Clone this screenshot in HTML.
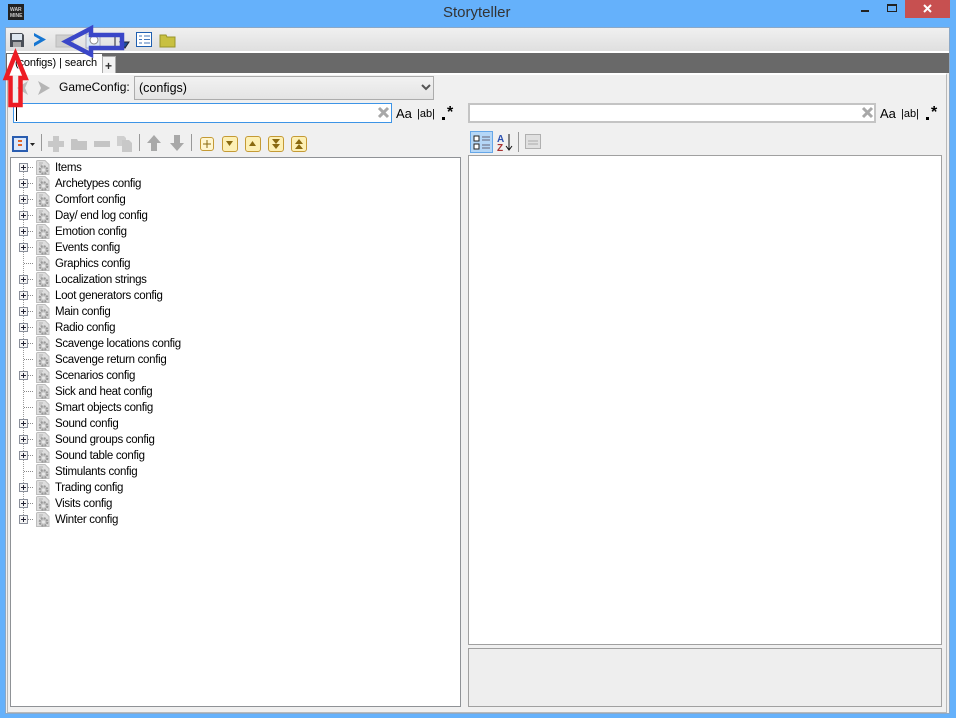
<!DOCTYPE html>
<html><head><meta charset="utf-8"><style>
html,body{margin:0;padding:0}
body{width:956px;height:718px;overflow:hidden;position:relative;background:#65b1fb;font-family:"Liberation Sans",sans-serif;font-size:11.500px;color:#000}
.a{position:absolute;box-sizing:border-box}
.t{position:absolute;white-space:nowrap;line-height:16px;letter-spacing:-.31px}
svg{position:absolute;left:0;top:0}
</style></head><body>
<div class="a" style="left:443px;top:5px;font-size:15px;color:#333;white-space:nowrap;line-height:16px">Storyteller</div>
<div class="a" style="left:905px;top:0;width:45px;height:18px;background:#c75050"></div>
<div class="a" style="left:5px;top:27px;width:945px;height:687px;background:#f0f0f0;border:1px solid #8aa8c8"></div>
<div class="a" style="left:6px;top:28px;width:943px;height:23px;background:linear-gradient(#f0f0f0,#dfdfdf)"></div>
<div class="a" style="left:6px;top:51px;width:943px;height:2px;background:#fff"></div>
<div class="a" style="left:6px;top:53px;width:943px;height:20px;background:#696969"></div>
<div class="a" style="left:7px;top:73px;width:940px;height:640px;background:#f0f0f0;border:1px solid #b8b8b8;border-top:2px solid #fff"></div>
<div class="a" style="left:7px;top:54px;width:95px;height:21px;background:#fff"></div>
<div class="a" style="left:102px;top:56px;width:14px;height:17px;background:#f2f2f2;border:1px solid #aaa;border-bottom:0"></div>
<div class="a" style="left:102px;top:58px;width:13px;text-align:center;font-size:12px;font-weight:bold;line-height:16px;color:#333">+</div>
<div class="t" style="left:15px;top:55px;font-size:11px;letter-spacing:-.12px">(configs) | search</div>
<div class="t" style="left:59px;top:79px;font-size:12px;letter-spacing:0">GameConfig:</div>
<div class="a" style="left:134px;top:76px;width:300px;height:24px;background:linear-gradient(#f2f2f2,#e4e4e4);border:1px solid #acacac"></div>
<div class="t" style="left:139px;top:80px;font-size:12.500px;letter-spacing:0">(configs)</div>
<div class="a" style="left:13px;top:103px;width:379px;height:20px;background:#fff;border:1px solid #3d94e6"></div>
<div class="a" style="left:16px;top:105px;width:1px;height:16px;background:#000"></div>
<div class="a" style="left:468px;top:103px;width:408px;height:20px;background:#fff;border:2px solid #c4c4c4"></div>
<div class="t" style="left:396px;top:106px;font-size:13px;letter-spacing:0">Aa</div>
<div class="t" style="left:417px;top:106px;font-size:11px;letter-spacing:0">|ab|</div>
<div class="t" style="left:880px;top:106px;font-size:13px;letter-spacing:0">Aa</div>
<div class="t" style="left:901px;top:106px;font-size:11px;letter-spacing:0">|ab|</div>
<div class="t" style="left:447px;top:105px;font-size:16px;font-weight:bold;letter-spacing:0">*</div>
<div class="t" style="left:931px;top:105px;font-size:16px;font-weight:bold;letter-spacing:0">*</div>
<div class="a" style="left:10px;top:157px;width:451px;height:550px;background:#fff;border:1px solid #8f9296"></div>
<div class="a" style="left:468px;top:155px;width:474px;height:490px;background:#fff;border:1px solid #a0a0a0"></div>
<div class="a" style="left:468px;top:648px;width:474px;height:59px;background:#eee;border:1px solid #a0a0a0"></div>
<div class="a" style="left:470px;top:131px;width:23px;height:22px;background:#b5d7f7;border:1px solid #66a7e8"></div>
<svg width="956" height="718" viewBox="0 0 956 718">
<defs>
<g id="ic"><path d="M.5 1.500Q.5.500 2 .500h7l4 4v10H.5z" fill="#dedede" stroke="#bdbdbd"/><path d="M3 3h4M3 5h3" stroke="#b0b0b0"/><circle cx="7.500" cy="10" r="3.800" fill="#c8c8c8" stroke="#999" stroke-width="2" stroke-dasharray="2 1"/><circle cx="7.500" cy="10" r="1.500" fill="#e8e8e8"/></g>
<g id="ex"><rect x=".5" y=".5" width="8" height="8" fill="#f4f4f4" stroke="#8a8f9a"/><path d="M2 4.500h5M4.500 2v5" stroke="#223"/><path d="M9 4.500h6" stroke="#888" stroke-dasharray="1 1"/></g>
<g id="cb"><rect x=".5" y=".5" width="15" height="15" rx="2.500" fill="#fdf0b5" stroke="#c49a35"/></g>
</defs>
<rect x="8" y="4" width="16" height="16" fill="#222"/><text x="10" y="11" font-size="5" font-weight="bold" fill="#ccc" font-family="Liberation Sans">WAR</text><text x="10" y="17" font-size="5" font-weight="bold" fill="#ccc" font-family="Liberation Sans">MINE</text>
<rect x="861" y="10" width="8" height="2" fill="#222"/>
<rect x="887.500" y="4.500" width="9" height="7" fill="none" stroke="#222"/><rect x="887" y="4" width="10" height="2" fill="#222"/>
<path d="M924 5l7 7M931 5l-7 7" stroke="#fff" stroke-width="2"/>
<path d="M10 33h12l2 2v12H10z" fill="#4a4f57"/><rect x="12" y="34" width="10" height="6" fill="#dde6ef"/><rect x="13" y="42" width="8" height="5" fill="#a8a8a8"/>
<path d="M34 33l12 6.500-12 7v-3.500l6-3.500-6-3.500z" fill="#1676d2"/>
<rect x="56" y="35" width="17" height="12" fill="#cfcfcf" stroke="#bbb"/>
<rect x="86" y="34" width="14" height="14" fill="#dce9f5" stroke="#aab"/><circle cx="94" cy="40" r="4" fill="#fff" stroke="#888"/>
<path d="M115 34v14M120 42l5 6 4-6z" fill="#1d4f9a" stroke="#223"/>
<rect x="136.500" y="32.500" width="15" height="14" fill="#fff" stroke="#1f5fb0"/><path d="M139 36h3M144 36h6M139 39.500h3M144 39.500h6M139 43h3M144 43h6" stroke="#4477bb"/>
<path d="M160 35h6l1 2h8v10h-15z" fill="#c8c040" stroke="#99952a"/>
<path d="M28 81l-11 7 11 7-3-7z" fill="#bdbdbd"/><path d="M38 81l12 7-12 7 3-7z" fill="#b5b5b5"/>
<path d="M422 85l4 4 4-4" fill="none" stroke="#555" stroke-width="2"/>
<path d="M379 108l9 9M388 108l-9 9M863 108l9 9M872 108l-9 9" stroke="#a8a8a8" stroke-width="3"/>
<rect x="442" y="117" width="3" height="3" fill="#000"/><rect x="926" y="117" width="3" height="3" fill="#000"/>
<rect x="13" y="137" width="14" height="14" fill="#dde8fa" stroke="#2a5db0" stroke-width="2"/><path d="M18 140h4v2h-4zM18 144h4v2h-4z" fill="#e0662a"/><path d="M30 143h5l-2.500 3z" fill="#222"/>
<path d="M41.500 134v17M139.500 134v17M191.500 134v17M518.500 132v20" stroke="#999"/>
<path d="M53 136h6v5h5v6h-5v5h-6v-5h-5v-6h5z" fill="#c8c8c8"/>
<path d="M71 139h6l1 2h9v9H71z" fill="#c4c4c4"/>
<rect x="94" y="141" width="16" height="6" fill="#c4c4c4"/>
<path d="M117 136h7l2 2v8h-9z" fill="#cfcfcf"/><path d="M122 140h7l3 3v9h-10z" fill="#c8c8c8"/>
<path d="M154 135l7 8h-4v8h-6v-8h-4z" fill="#a8a8a8"/><path d="M174 135h6v8h4l-7 8-7-8h4z" fill="#a8a8a8"/>
<rect x="200.500" y="137.500" width="13" height="13" rx="2.500" fill="#fff6d0" stroke="#c49a35"/><path d="M203 144h8M207 140v8" stroke="#8a6a10"/>
<use href="#cb" x="222" y="136"/><path d="M226 141h7l-3.500 5z" fill="#8a6a10"/>
<use href="#cb" x="245" y="136"/><path d="M249 146h7l-3.500-5z" fill="#8a6a10"/>
<use href="#cb" x="268" y="136"/><path d="M272 139h8l-4 5zM272 144h8l-4 5z" fill="#8a6a10"/>
<use href="#cb" x="291" y="136"/><path d="M295 144h8l-4-5zM295 149h8l-4-5z" fill="#8a6a10"/>
<path d="M474 136h5v5h-5zM474 144h5v5h-5z" fill="#fff" stroke="#222"/><path d="M482 137h8M482 140h8M482 145h8M482 148h8" stroke="#667"/>
<text x="497" y="142" font-size="10" font-weight="bold" fill="#2a50b0" font-family="Liberation Sans">A</text><text x="497" y="151" font-size="10" font-weight="bold" fill="#a83030" font-family="Liberation Sans">Z</text><path d="M509 134v15M506 146l3 4 3-4" stroke="#111" fill="none"/>
<rect x="525.500" y="134.500" width="15" height="14" fill="#e0e0e0" stroke="#b0b0b0"/><path d="M528 141h10M528 144h10" stroke="#aaa"/>
<path d="M23.500 168v352" stroke="#999" stroke-dasharray="1 1"/>
<g id="tree">
<use href="#ex" x="19" y="163"/><use href="#ic" x="36" y="160"/>
<use href="#ex" x="19" y="179"/><use href="#ic" x="36" y="176"/>
<use href="#ex" x="19" y="195"/><use href="#ic" x="36" y="192"/>
<use href="#ex" x="19" y="211"/><use href="#ic" x="36" y="208"/>
<use href="#ex" x="19" y="227"/><use href="#ic" x="36" y="224"/>
<use href="#ex" x="19" y="243"/><use href="#ic" x="36" y="240"/>
<path d="M24 263.500h10" stroke="#888" stroke-dasharray="1 1"/><use href="#ic" x="36" y="256"/>
<use href="#ex" x="19" y="275"/><use href="#ic" x="36" y="272"/>
<use href="#ex" x="19" y="291"/><use href="#ic" x="36" y="288"/>
<use href="#ex" x="19" y="307"/><use href="#ic" x="36" y="304"/>
<use href="#ex" x="19" y="323"/><use href="#ic" x="36" y="320"/>
<use href="#ex" x="19" y="339"/><use href="#ic" x="36" y="336"/>
<path d="M24 359.500h10" stroke="#888" stroke-dasharray="1 1"/><use href="#ic" x="36" y="352"/>
<use href="#ex" x="19" y="371"/><use href="#ic" x="36" y="368"/>
<path d="M24 391.500h10" stroke="#888" stroke-dasharray="1 1"/><use href="#ic" x="36" y="384"/>
<path d="M24 407.500h10" stroke="#888" stroke-dasharray="1 1"/><use href="#ic" x="36" y="400"/>
<use href="#ex" x="19" y="419"/><use href="#ic" x="36" y="416"/>
<use href="#ex" x="19" y="435"/><use href="#ic" x="36" y="432"/>
<use href="#ex" x="19" y="451"/><use href="#ic" x="36" y="448"/>
<path d="M24 471.500h10" stroke="#888" stroke-dasharray="1 1"/><use href="#ic" x="36" y="464"/>
<use href="#ex" x="19" y="483"/><use href="#ic" x="36" y="480"/>
<use href="#ex" x="19" y="499"/><use href="#ic" x="36" y="496"/>
<use href="#ex" x="19" y="515"/><use href="#ic" x="36" y="512"/>
</g>
</svg>
<div class="t" style="left:55px;top:160px">Items</div>
<div class="t" style="left:55px;top:176px">Archetypes config</div>
<div class="t" style="left:55px;top:192px">Comfort config</div>
<div class="t" style="left:55px;top:208px">Day/ end log config</div>
<div class="t" style="left:55px;top:224px">Emotion config</div>
<div class="t" style="left:55px;top:240px">Events config</div>
<div class="t" style="left:55px;top:256px">Graphics config</div>
<div class="t" style="left:55px;top:272px">Localization strings</div>
<div class="t" style="left:55px;top:288px">Loot generators config</div>
<div class="t" style="left:55px;top:304px">Main config</div>
<div class="t" style="left:55px;top:320px">Radio config</div>
<div class="t" style="left:55px;top:336px">Scavenge locations config</div>
<div class="t" style="left:55px;top:352px">Scavenge return config</div>
<div class="t" style="left:55px;top:368px">Scenarios config</div>
<div class="t" style="left:55px;top:384px">Sick and heat config</div>
<div class="t" style="left:55px;top:400px">Smart objects config</div>
<div class="t" style="left:55px;top:416px">Sound config</div>
<div class="t" style="left:55px;top:432px">Sound groups config</div>
<div class="t" style="left:55px;top:448px">Sound table config</div>
<div class="t" style="left:55px;top:464px">Stimulants config</div>
<div class="t" style="left:55px;top:480px">Trading config</div>
<div class="t" style="left:55px;top:496px">Visits config</div>
<div class="t" style="left:55px;top:512px">Winter config</div>
<svg width="956" height="718" viewBox="0 0 956 718" style="z-index:5">
<path d="M66 41.500L91 28.500v6.500h31v13H91v6.500z" fill="none" stroke="#3a46c8" stroke-width="4.500"/>
<path d="M15.500 54L6 78h4.500v27h10V78h5z" fill="none" stroke="#ed1c24" stroke-width="4.500"/>
</svg>
</body></html>
